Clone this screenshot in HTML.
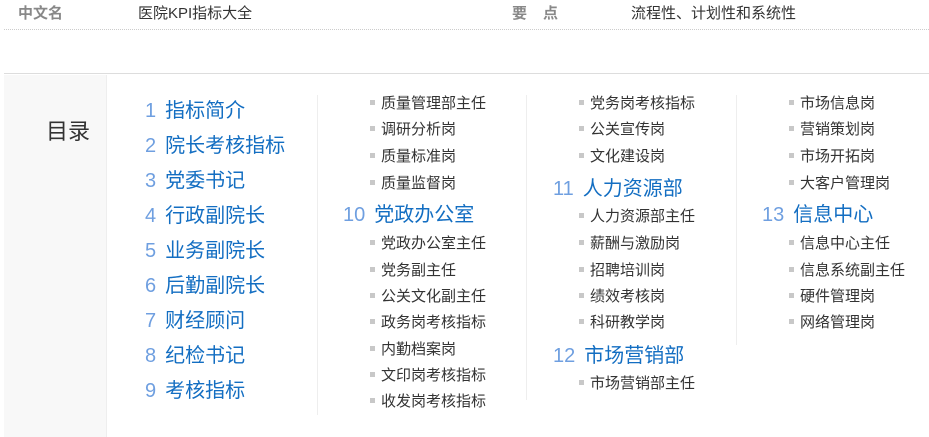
<!DOCTYPE html>
<html><head><meta charset="utf-8"><style>
body{margin:0;width:929px;height:437px;background:#fff;position:relative;overflow:hidden;font-family:"Liberation Sans","Noto Sans CJK SC",sans-serif;}
.a{position:absolute;white-space:nowrap;line-height:1;}
.lbl{color:#888;font-size:15px;font-weight:bold;}
.t{color:#333;font-size:15px;}
.h{color:#136ec2;font-size:20px;}
.h span{color:#6f9fe0;margin-right:9px;}
.it{color:#333;font-size:15px;}
.it:before{content:"";display:inline-block;width:5px;height:5px;background:#c8c8c8;margin-right:6px;vertical-align:3px;}
.vl{position:absolute;top:95px;height:320px;width:1px;background:#eee;}
</style></head><body>
<div class="a lbl" style="left:18px;top:6px;">中文名</div>
<div class="a t" style="left:138px;top:6px;">医院KPI指标大全</div>
<div class="a lbl" style="left:512px;top:6px;letter-spacing:16px;">要点</div>
<div class="a t" style="left:631px;top:6px;">流程性、计划性和系统性</div>
<div style="position:absolute;left:4px;right:0;top:29px;border-top:1px dotted #ccc;"></div>
<div style="position:absolute;left:4px;right:0;top:73px;border-top:1px solid #ddd;"></div>
<div style="position:absolute;left:4px;width:102px;top:75px;bottom:0;background:#f8f8f8;border-right:1px solid #eee;"></div>
<div class="a" style="left:46px;top:121px;font-size:22px;color:#333;">目录</div>
<div class="vl" style="left:317px"></div><div class="vl" style="left:526px;height:305px"></div><div class="vl" style="left:736px;height:250px"></div>

<div class="a h" style="left:145px;top:101px"><span>1</span>指标简介</div>
<div class="a h" style="left:145px;top:136px"><span>2</span>院长考核指标</div>
<div class="a h" style="left:145px;top:171px"><span>3</span>党委书记</div>
<div class="a h" style="left:145px;top:206px"><span>4</span>行政副院长</div>
<div class="a h" style="left:145px;top:241px"><span>5</span>业务副院长</div>
<div class="a h" style="left:145px;top:276px"><span>6</span>后勤副院长</div>
<div class="a h" style="left:145px;top:311px"><span>7</span>财经顾问</div>
<div class="a h" style="left:145px;top:346px"><span>8</span>纪检书记</div>
<div class="a h" style="left:145px;top:381px"><span>9</span>考核指标</div>

<div class="a it" style="left:370px;top:96px">质量管理部主任</div>
<div class="a it" style="left:370px;top:122px">调研分析岗</div>
<div class="a it" style="left:370px;top:149px">质量标准岗</div>
<div class="a it" style="left:370px;top:176px">质量监督岗</div>
<div class="a h" style="left:343px;top:205px"><span>10</span>党政办公室</div>
<div class="a it" style="left:370px;top:236px">党政办公室主任</div>
<div class="a it" style="left:370px;top:263px">党务副主任</div>
<div class="a it" style="left:370px;top:289px">公关文化副主任</div>
<div class="a it" style="left:370px;top:315px">政务岗考核指标</div>
<div class="a it" style="left:370px;top:342px">内勤档案岗</div>
<div class="a it" style="left:370px;top:368px">文印岗考核指标</div>
<div class="a it" style="left:370px;top:394px">收发岗考核指标</div>

<div class="a it" style="left:579px;top:96px">党务岗考核指标</div>
<div class="a it" style="left:579px;top:122px">公关宣传岗</div>
<div class="a it" style="left:579px;top:149px">文化建设岗</div>
<div class="a h" style="left:553px;top:179px"><span>11</span>人力资源部</div>
<div class="a it" style="left:579px;top:209px">人力资源部主任</div>
<div class="a it" style="left:579px;top:236px">薪酬与激励岗</div>
<div class="a it" style="left:579px;top:263px">招聘培训岗</div>
<div class="a it" style="left:579px;top:289px">绩效考核岗</div>
<div class="a it" style="left:579px;top:315px">科研教学岗</div>
<div class="a h" style="left:553px;top:346px"><span>12</span>市场营销部</div>
<div class="a it" style="left:579px;top:376px">市场营销部主任</div>

<div class="a it" style="left:789px;top:96px">市场信息岗</div>
<div class="a it" style="left:789px;top:122px">营销策划岗</div>
<div class="a it" style="left:789px;top:149px">市场开拓岗</div>
<div class="a it" style="left:789px;top:176px">大客户管理岗</div>
<div class="a h" style="left:762px;top:205px"><span>13</span>信息中心</div>
<div class="a it" style="left:789px;top:236px">信息中心主任</div>
<div class="a it" style="left:789px;top:263px">信息系统副主任</div>
<div class="a it" style="left:789px;top:289px">硬件管理岗</div>
<div class="a it" style="left:789px;top:315px">网络管理岗</div>
</body></html>
